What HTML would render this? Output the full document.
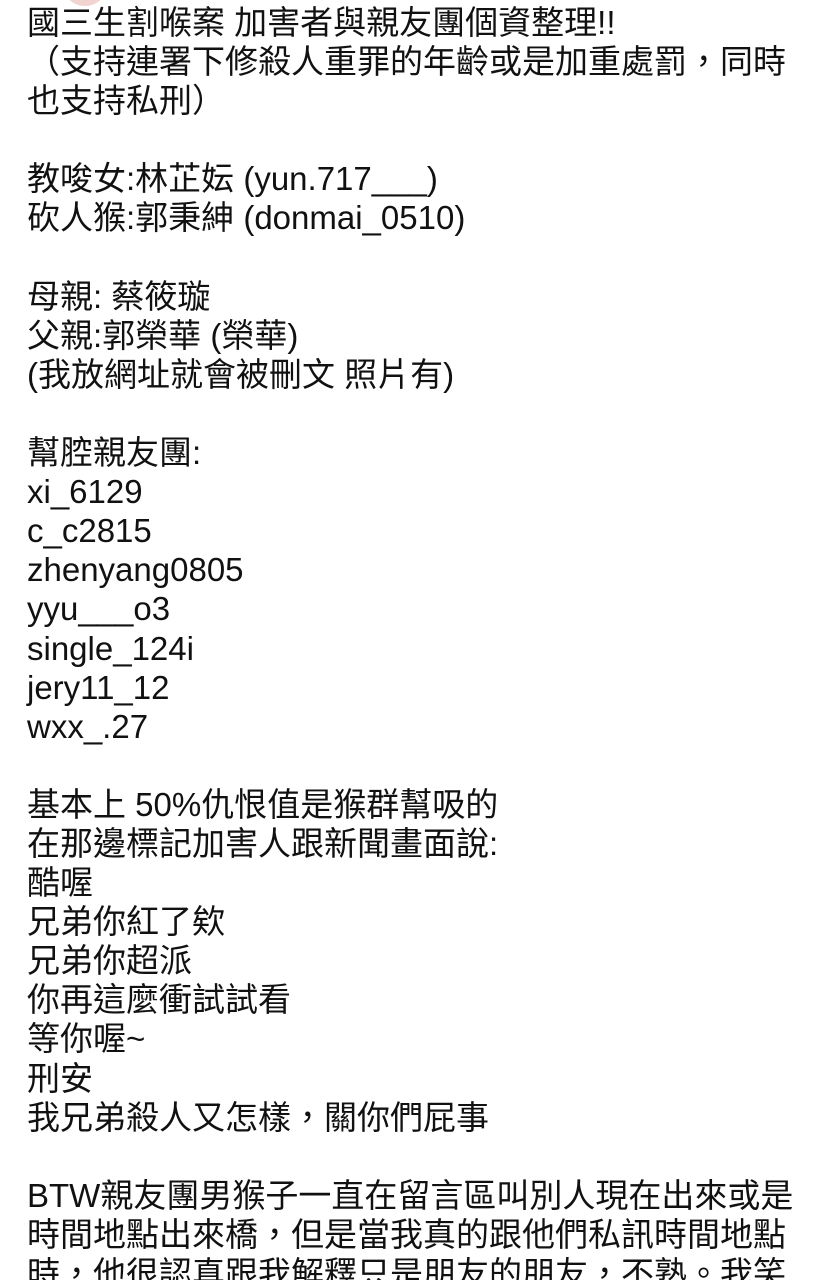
<!DOCTYPE html>
<html><head><meta charset="utf-8"><style>
html,body{margin:0;padding:0;background:#fff;width:840px;height:1280px;overflow:hidden;position:relative}
.c{position:absolute;left:62px;top:-40px;width:46px;height:46px;border-radius:50%;background:#f1d4cf}
.t{position:absolute;left:27px;top:3px;font-family:"Liberation Sans","Noto Sans CJK TC",sans-serif;font-size:33px;line-height:39.1px;color:#111;white-space:pre}
</style></head><body>
<div class="c"></div>
<div class="t">國三生割喉案 加害者與親友團個資整理!!
（支持連署下修殺人重罪的年齡或是加重處罰，同時
也支持私刑）

教唆女:林芷妘 (yun.717___)
砍人猴:郭秉紳 (donmai_0510)

母親: 蔡筱璇
父親:郭榮華 (榮華)
(我放網址就會被刪文 照片有)

幫腔親友團:
xi_6129
c_c2815
zhenyang0805
yyu___o3
single_124i
jery11_12
wxx_.27

基本上 50%仇恨值是猴群幫吸的
在那邊標記加害人跟新聞畫面說:
酷喔
兄弟你紅了欸
兄弟你超派
你再這麼衝試試看
等你喔~
刑安
我兄弟殺人又怎樣，關你們屁事

BTW親友團男猴子一直在留言區叫別人現在出來或是
時間地點出來橋，但是當我真的跟他們私訊時間地點
時，他很認真跟我解釋只是朋友的朋友，不熟。我笑</div>
</body></html>
